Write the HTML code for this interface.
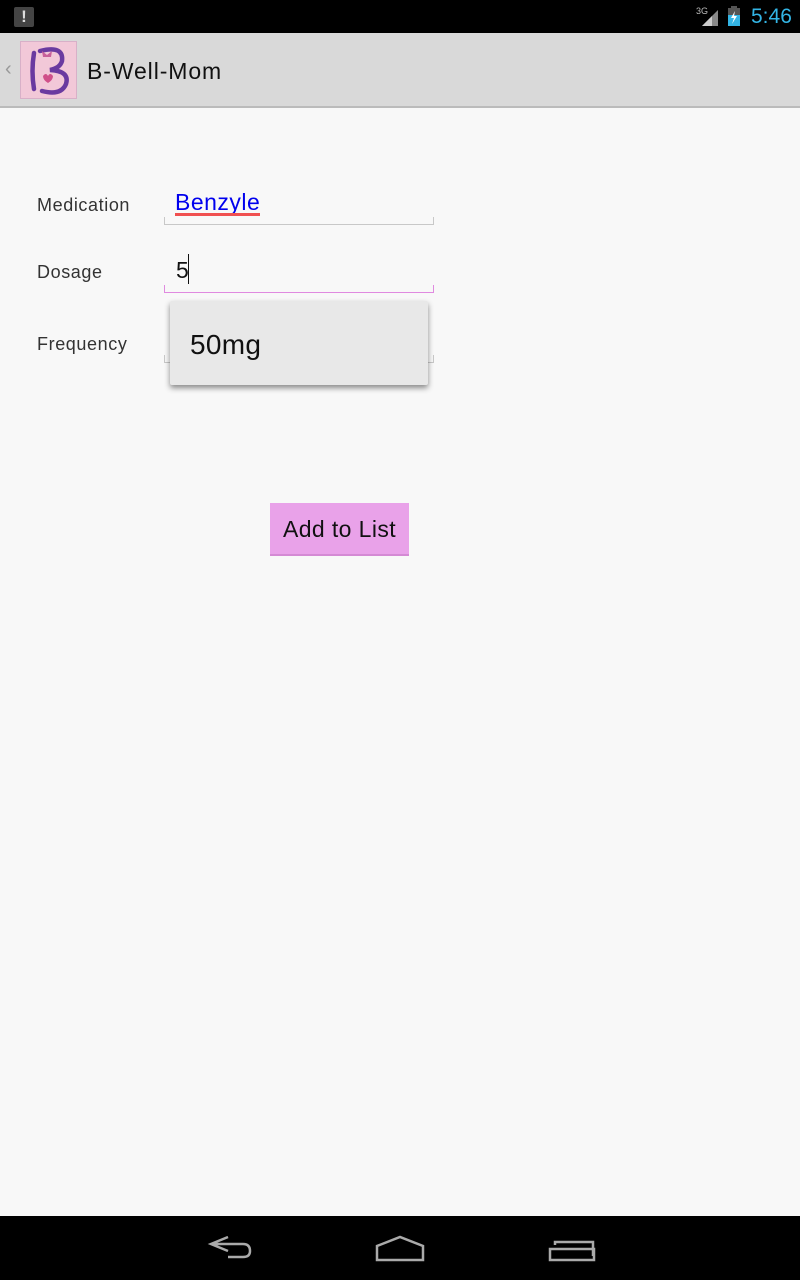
<!DOCTYPE html>
<html><head><meta charset="utf-8"><style>
*{margin:0;padding:0;box-sizing:border-box}
body{width:800px;height:1280px;background:#f8f8f8;font-family:"Liberation Sans","DejaVu Sans",sans-serif;position:relative;overflow:hidden}
.abs{position:absolute}
.lbl{position:absolute;left:37px;font-size:18px;color:#333;letter-spacing:0.6px}
.line{position:absolute;left:164px;width:270px;height:8px;border:1px solid #c8c8c8;border-top:none}
</style></head><body>
<div class="abs" style="left:0;top:0;width:800px;height:33px;background:#000"></div>
<div class="abs" style="left:14px;top:7px;width:20px;height:20px;background:#444;border-radius:2px;color:#ddd;font-weight:bold;font-size:17px;text-align:center;line-height:20px">!</div>
<svg class="abs" style="left:694px;top:4px" width="30" height="24"><text x="2" y="10" font-size="9" fill="#bbb" font-family="Liberation Sans">3G</text><polygon points="8,22 24,6 24,22" fill="#888"/><polygon points="8,22 18,12 18,22" fill="#ccc"/></svg>
<svg class="abs" style="left:727px;top:6px" width="16" height="22"><rect x="4" y="0" width="6" height="3" fill="#555"/><rect x="1" y="2" width="12" height="18" fill="#555"/><rect x="1" y="9" width="12" height="11" fill="#33b5e5"/><polygon points="8,5 4,12 7,12 5,18 10,10 7,10" fill="#fff"/></svg>
<div class="abs" style="left:751px;top:5px;font-size:21px;color:#33b5e5">5:46</div>
<div class="abs" style="left:0;top:33px;width:800px;height:75px;background:#d9d9d9;border-bottom:2px solid #bbb"></div>
<div class="abs" style="left:5px;top:58px;font-size:20px;color:#999">‹</div>
<div class="abs" style="left:20px;top:41px;width:57px;height:58px;background:#f2c8d8;border:1px solid #d8b0c8"></div>
<svg class="abs" style="left:20px;top:41px" width="57" height="58"><path d="M14 12 Q11 30 14 48" stroke="#6a3aa0" stroke-width="4.5" fill="none" stroke-linecap="round"/><path d="M20 10 Q44 4 42 20 Q40 27 30 29 Q50 30 46 43 Q41 55 22 50" stroke="#6a3aa0" stroke-width="4.5" fill="none" stroke-linecap="round"/><path d="M23 35 q3 -4 5 0 q2 -4 5 0 q0 4 -5 7 q-5 -3 -5 -7z" fill="#d0508a"/><path d="M22 10 l5 4 l5 -4 l-1 6 l-8 0z" fill="#c8609a"/></svg>
<div class="abs" style="left:87px;top:58px;font-size:23px;color:#111;letter-spacing:0.9px">B-Well-Mom</div>
<div class="lbl" style="top:195px">Medication</div>
<div class="abs" style="left:175px;top:189px;font-size:23px;color:#0000ee;letter-spacing:0.5px">Benzyle</div>
<div class="abs" style="left:175px;top:213px;width:85px;height:3px;background:#f05050"></div>
<div class="line" style="top:217px"></div>
<div class="lbl" style="top:262px">Dosage</div>
<div class="abs" style="left:176px;top:257px;font-size:23px;color:#111">5</div>
<div class="abs" style="left:188px;top:254px;width:1px;height:30px;background:#111"></div>
<div class="line" style="top:285px;border-color:#e08ae0"></div>
<div class="lbl" style="top:334px">Frequency</div>
<div class="line" style="top:355px"></div>
<div class="abs" style="left:170px;top:301px;width:258px;height:84px;background:#e8e8e8;border-radius:2px;box-shadow:0 3px 6px rgba(0,0,0,.45)"></div>
<div class="abs" style="left:190px;top:329px;font-size:28px;color:#111;letter-spacing:0.3px">50mg</div>
<div class="abs" style="left:270px;top:503px;width:139px;height:53px;background:#e9a2e9;border-bottom:2px solid #d48ad4;font-size:23px;color:#111;text-align:center;line-height:53px;letter-spacing:0.4px">Add to List</div>
<div class="abs" style="left:0;top:1216px;width:800px;height:64px;background:#000"></div>
<svg class="abs" style="left:0;top:1216px" width="800" height="64" fill="none" stroke="#aaa" stroke-width="2.5">
<path d="M228 21 L211 28 L228 35 M211 28 L243 28 Q250 28 250 35 Q250 41 243 41 L228 41"/>
<path d="M377 44 L377 30 L400 21 L423 30 L423 44 Z"/>
<path d="M550 33 h44 v11 h-44 z M555 29 V26 H593 V40"/>
</svg>
</body></html>
